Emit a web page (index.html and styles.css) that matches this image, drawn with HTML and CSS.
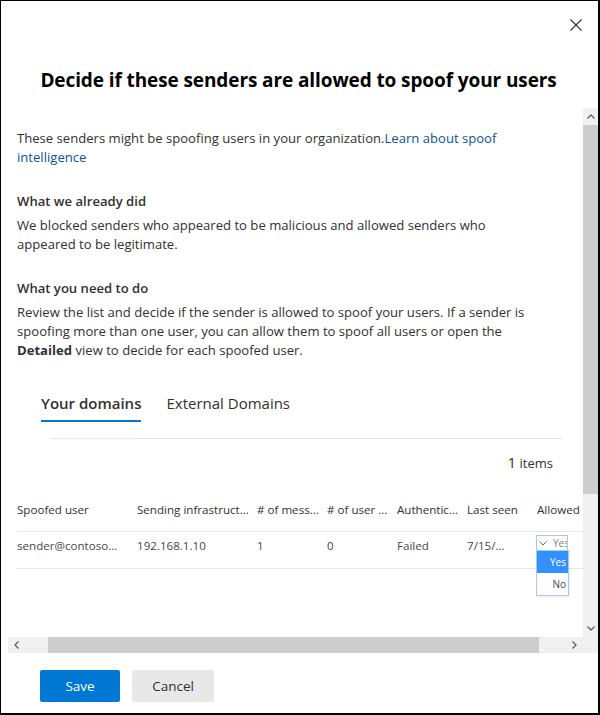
FILE: index.html
```html
<!DOCTYPE html>
<html lang="en">
<head>
<meta charset="utf-8">
<title>Spoof intelligence</title>
<link rel="stylesheet" href="styles.css">
</head>
<body>
<div class="dialog">
  <header class="header">
    <div class="close-row">
      <button class="close" aria-label="Close">
        <svg width="12" height="12" viewBox="0 0 12 12"><path d="M0.5 0.5 L11.5 11.5 M11.5 0.5 L0.5 11.5" stroke="#323130" stroke-width="1.1" fill="none"/></svg>
      </button>
    </div>
    <h1 class="title">Decide if these senders are allowed to spoof your users</h1>
  </header>

  <div class="scroll-area">
    <div class="content">
      <p class="text">These senders might be spoofing users in your organization.<a class="link" href="#">Learn about spoof<br>intelligence</a></p>

      <h2 class="subhead">What we already did</h2>
      <p class="text tight">We blocked senders who appeared to be malicious and allowed senders who<br>appeared to be legitimate.</p>

      <h2 class="subhead">What you need to do</h2>
      <p class="text tight">Review the list and decide if the sender is allowed to spoof your users. If a sender is<br>spoofing more than one user, you can allow them to spoof all users or open the<br><b>Detailed</b> view to decide for each spoofed user.</p>

      <div class="tabs">
        <span class="tab active">Your domains</span>
        <span class="tab">External Domains</span>
      </div>
      <div class="divider"></div>
      <div class="count"><span class="count-num">1</span> items</div>

      <div class="table">
        <div class="trow thead">
          <span class="cell w120">Spoofed user</span>
          <span class="cell w120">Sending infrastruct...</span>
          <span class="cell w70"># of mess...</span>
          <span class="cell w70"># of user ...</span>
          <span class="cell w70">Authentic...</span>
          <span class="cell w70">Last seen</span>
          <span class="cell w60">Allowed</span>
        </div>
        <div class="trow tbody">
          <span class="cell w120">sender@contoso...</span>
          <span class="cell w120">192.168.1.10</span>
          <span class="cell w70">1</span>
          <span class="cell w70">0</span>
          <span class="cell w70">Failed</span>
          <span class="cell w70">7/15/...</span>
          <span class="cell w60 select-cell">
            <span class="select">
              <svg class="chev" width="8" height="5" viewBox="0 0 8 5"><path d="M0.5 0.5 L4 4 L7.5 0.5" stroke="#6a6a6a" fill="none" stroke-width="1"/></svg>
              <span class="select-val">Yes</span>
            </span>
            <span class="options">
              <span class="option selected">Yes</span>
              <span class="option">No</span>
            </span>
          </span>
        </div>
      </div>
    </div>
    <div class="vscroll">
      <div class="sb-btn">
        <svg width="8" height="5" viewBox="0 0 8 5"><path d="M0.5 4.5 L4 1 L7.5 4.5" stroke="#606060" fill="none" stroke-width="1.3"/></svg>
      </div>
      <div class="vthumb"></div>
      <div class="vtrack"></div>
      <div class="sb-btn">
        <svg width="8" height="5" viewBox="0 0 8 5"><path d="M0.5 0.5 L4 4 L7.5 0.5" stroke="#606060" fill="none" stroke-width="1.3"/></svg>
      </div>
    </div>
  </div>

  <div class="hscroll-row">
    <div class="hscroll">
      <div class="hbtn">
        <svg width="5" height="8" viewBox="0 0 5 8"><path d="M4.5 0.5 L1 4 L4.5 7.5" stroke="#606060" fill="none" stroke-width="1.3"/></svg>
      </div>
      <div class="hthumb"></div>
      <div class="htrack"></div>
      <div class="hbtn">
        <svg width="5" height="8" viewBox="0 0 5 8"><path d="M0.5 0.5 L4 4 L0.5 7.5" stroke="#606060" fill="none" stroke-width="1.3"/></svg>
      </div>
    </div>
    <div class="corner"></div>
  </div>

  <footer class="footer">
    <button class="btn primary">Save</button>
    <button class="btn default">Cancel</button>
  </footer>
</div>
</body>
</html>
```

FILE: styles.css
```css
* { box-sizing: border-box; }

html, body {
  margin: 0;
  padding: 0;
  background: #fff;
}

body {
  font-family: "Open Sans", "Noto Sans", sans-serif;
  color: #323130;
}

.dialog {
  width: 600px;
  height: 715px;
  border-style: solid;
  border-color: #000;
  border-width: 1px 2px 2px 1px;
  display: flex;
  flex-direction: column;
  background: #fff;
}

.header {
  height: 107px;
  flex: none;
}

.close-row {
  display: flex;
  justify-content: flex-end;
  padding: 18px 16px 0 0;
}

.close {
  border: 0;
  background: none;
  padding: 0;
  width: 12px;
  height: 12px;
  display: block;
}

.close svg { display: block; }

.title {
  margin: 36px 0 0;
  padding-right: 2px;
  font-size: 19px;
  line-height: 26px;
  font-weight: 700;
  color: #000;
  text-align: center;
  letter-spacing: -0.1px;
}

.scroll-area {
  flex: none;
  height: 529px;
  display: flex;
}

.content {
  flex: 1;
  min-width: 0;
  overflow: hidden;
  padding: 21px 0 0 16px;
}

.text {
  margin: 0;
  font-size: 13.1px;
  line-height: 19px;
  color: #323130;
}

.text.tight { margin-top: 5px; }

.text b { font-weight: 700; }

.link {
  color: #0b5394;
  text-decoration: none;
}

.subhead {
  margin: 25px 0 0;
  font-size: 13.1px;
  line-height: 19px;
  font-weight: 600;
  color: #323130;
}

.tabs {
  display: flex;
  gap: 25px;
  margin: 33px 0 0 24px;
}

.tab {
  font-size: 15px;
  line-height: 20px;
  padding-bottom: 7px;
  border-bottom: 2px solid transparent;
  color: #323130;
}

.tab.active {
  font-weight: 600;
  border-bottom-color: #0078d4;
}

.divider {
  margin: 16px 0 0 33px;
  width: 512px;
  height: 1px;
  background: #e6e6e6;
}

.count {
  margin: 13px 0 0 33px;
  width: 503px;
  text-align: right;
  font-size: 13px;
  line-height: 20px;
}

.count-num { font-size: 15px; }

.table {
  margin-top: 16px;
  width: 600px;
}

.trow {
  display: flex;
  border-bottom: 1px solid #e6e6e6;
  font-size: 11.6px;
}

.thead {
  height: 43px;
  align-items: center;
  color: #323130;
}

.tbody {
  height: 37px;
  align-items: flex-start;
  padding-top: 6px;
  color: #484644;
}

.cell {
  flex: none;
  white-space: nowrap;
  line-height: 16px;
  padding-right: 6px;
}

.w120 { width: 120px; }
.w70 { width: 70px; }
.w60 { width: 60px; }

.select-cell {
  position: relative;
}

.select {
  display: flex;
  align-items: center;
  gap: 6px;
  width: 32px;
  height: 16px;
  margin: -3px 0 0 -1px;
  border: 1px solid #a9c9f2;
  padding-left: 2px;
  overflow: hidden;
  font-size: 10px;
  color: #808080;
}

.chev { flex: none; display: block; }

.select-val { white-space: nowrap; }

.options {
  position: absolute;
  left: -1px;
  top: 12px;
  width: 33px;
  border: 1px solid #a9c9f2;
  background: #fff;
  display: flex;
  flex-direction: column;
  box-shadow: 1px 1px 2px rgba(0,0,0,0.08);
}

.option {
  height: 22px;
  line-height: 22px;
  font-size: 10px;
  text-align: right;
  padding-right: 2px;
  color: #444;
}

.option.selected {
  background: #3390ff;
  color: #fff;
}

.vscroll {
  flex: none;
  width: 15px;
  background: #f0f0f0;
  display: flex;
  flex-direction: column;
}

.sb-btn {
  flex: none;
  height: 17px;
  display: flex;
  align-items: center;
  justify-content: center;
}

.sb-btn svg { display: block; }

.vthumb {
  flex: none;
  height: 369px;
  background: #cdcdcd;
}

.vtrack { flex: 1; }

.hscroll-row {
  flex: none;
  height: 16px;
  display: flex;
  padding-left: 7px;
}

.hscroll {
  flex: 1;
  display: flex;
  background: #f0f0f0;
}

.hbtn {
  flex: none;
  width: 17px;
  display: flex;
  align-items: center;
  justify-content: center;
}

.hbtn svg { display: block; }

.hthumb {
  flex: none;
  margin-left: 23px;
  width: 491px;
  background: #cdcdcd;
}

.htrack { flex: 1; }

.corner {
  flex: none;
  width: 15px;
  background: #f0f0f0;
}

.footer {
  flex: none;
  display: flex;
  gap: 12px;
  padding: 17px 0 0 39px;
}

.btn {
  height: 32px;
  border: 0;
  border-radius: 2px;
  font-family: "Open Sans", "Noto Sans", sans-serif;
  font-size: 13.5px;
  padding: 0;
  cursor: pointer;
}

.btn.primary {
  width: 80px;
  background: #0078d4;
  color: #fff;
}

.btn.default {
  width: 82px;
  background: #e8e8e8;
  color: #323130;
}
```
